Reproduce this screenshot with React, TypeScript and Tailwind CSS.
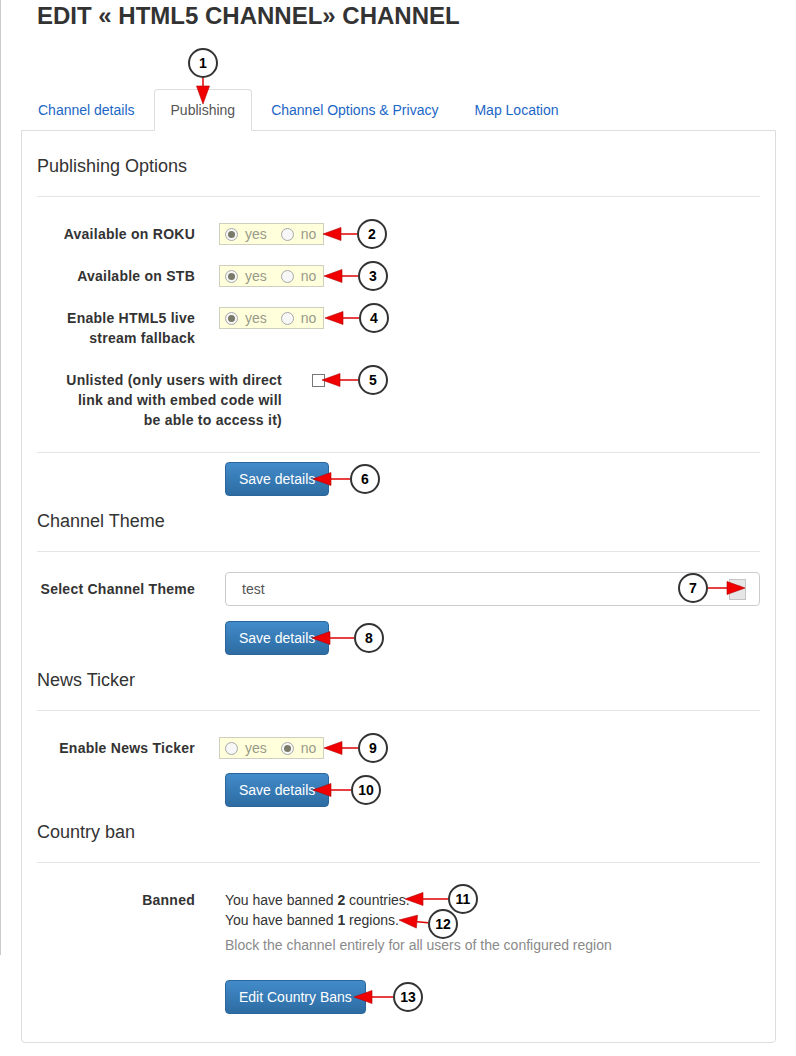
import React from 'react';

type Callout = { n: number; cx: number; cy: number; tx: number; ty: number };

const callouts: Callout[] = [
  { n: 1, cx: 203, cy: 63, tx: 203, ty: 104 },
  { n: 2, cx: 372, cy: 234, tx: 323, ty: 234 },
  { n: 3, cx: 373, cy: 276, tx: 324, ty: 276 },
  { n: 4, cx: 374, cy: 318, tx: 325, ty: 318 },
  { n: 5, cx: 373, cy: 380, tx: 322, ty: 380 },
  { n: 6, cx: 365, cy: 479, tx: 313, ty: 479 },
  { n: 7, cx: 693, cy: 588, tx: 745, ty: 588 },
  { n: 8, cx: 369, cy: 638, tx: 312, ty: 638 },
  { n: 9, cx: 373, cy: 748, tx: 324, ty: 748 },
  { n: 10, cx: 366, cy: 790, tx: 313, ty: 790 },
  { n: 11, cx: 463, cy: 899, tx: 405, ty: 899 },
  { n: 12, cx: 443, cy: 924, tx: 399, ty: 920 },
  { n: 13, cx: 408, cy: 997, tx: 354, ty: 997 },
];

function Annotations() {
  return (
    <svg
      className="pointer-events-none absolute left-0 top-0 z-20"
      width={796}
      height={1056}
      viewBox="0 0 796 1056"
    >
      {callouts.map((c) => {
        const dx = c.tx - c.cx;
        const dy = c.ty - c.cy;
        const len = Math.sqrt(dx * dx + dy * dy);
        const ux = dx / len;
        const uy = dy / len;
        const px = -uy;
        const py = ux;
        const head = 18;
        const hw = 6.5;
        const sx = c.cx + ux * 15;
        const sy = c.cy + uy * 15;
        const bx = c.tx - ux * head;
        const by = c.ty - uy * head;
        return (
          <g key={c.n}>
            <line x1={sx} y1={sy} x2={bx} y2={by} stroke="#e00000" strokeWidth={1.5} />
            <polygon
              points={`${c.tx},${c.ty} ${bx + px * hw},${by + py * hw} ${bx - px * hw},${by - py * hw}`}
              fill="#f00000"
              stroke="#b00000"
              strokeWidth={0.6}
            />
            <circle cx={c.cx} cy={c.cy} r={14} fill="#fff" stroke="#333" strokeWidth={2} />
            <text
              x={c.cx}
              y={c.cy + 5}
              textAnchor="middle"
              fontSize={14}
              fontWeight="bold"
              fontFamily="'Liberation Sans', Arial, sans-serif"
              fill="#000"
            >
              {c.n}
            </text>
          </g>
        );
      })}
    </svg>
  );
}

function Radio({ checked }: { checked?: boolean }) {
  return (
    <span className="flex h-[13px] w-[13px] items-center justify-center rounded-full border border-[#a8a8a8] bg-[#f7f7f7]">
      {checked && <span className="h-[7px] w-[7px] rounded-full bg-[#7a7a6a]" />}
    </span>
  );
}

function YesNo({ value }: { value: 'yes' | 'no' }) {
  return (
    <div className="-ml-[6px] flex h-[22px] w-[105px] items-center border border-[#cfcfbf] bg-[#ffffdc] pl-[5px] text-[14px] text-[#9a9a8a]">
      <Radio checked={value === 'yes'} />
      <span className="ml-[7px]">yes</span>
      <span className="ml-[14px]">
        <Radio checked={value === 'no'} />
      </span>
      <span className="ml-[7px]">no</span>
    </div>
  );
}

const labelText = 'shrink-0 whitespace-nowrap text-right text-[14px] font-bold leading-5 tracking-[0.25px] text-[#333]';

function Row({
  label,
  className,
  labelWidth = 'w-[158px]',
  children,
}: {
  label: React.ReactNode;
  className?: string;
  labelWidth?: string;
  children: React.ReactNode;
}) {
  return (
    <div className={'flex items-start ' + (className ?? '')}>
      <div className={'mt-px ' + labelText + ' ' + labelWidth}>{label}</div>
      <div className="ml-[30px] flex-1">{children}</div>
    </div>
  );
}

function SaveButton({ label, className }: { label: string; className?: string }) {
  return (
    <button
      className={
        'h-[34px] rounded-[4px] border border-[#2b669a] bg-linear-to-b from-[#428bca] to-[#2d6ca2] px-[13px] text-[14px] text-white ' +
        (className ?? '')
      }
    >
      {label}
    </button>
  );
}

function SectionHeading({ title, className }: { title: string; className?: string }) {
  return (
    <>
      <h3 className={'text-[18px] leading-5 text-[#333] ' + (className ?? '')}>{title}</h3>
      <div className="mt-5 h-px bg-[#e5e5e5]" />
    </>
  );
}

export default function App() {
  const tabs = ['Channel details', 'Publishing', 'Channel Options & Privacy', 'Map Location'];

  return (
    <div className="relative flex h-[1056px] w-[796px] overflow-hidden bg-white font-['Liberation_Sans',Arial,sans-serif] text-[#333]">
      <div className="h-[955px] w-px shrink-0 bg-[#cccccc]" />

      <div className="ml-[20px] w-[755px]">
        <h1 className="ml-[16px] mt-[2px] text-[24px] font-bold leading-[28px] text-[#333]">
          EDIT « HTML5 CHANNEL» CHANNEL
        </h1>

        <ul className="mt-[59px] flex">
          {tabs.map((t) => {
            const active = t === 'Publishing';
            return (
              <li
                key={t}
                className={
                  'relative z-10 -mb-px mr-[2px] rounded-t-[4px] border px-[16px] py-[10px] text-[14px] leading-5 ' +
                  (active
                    ? 'border-[#ddd] border-b-white bg-white text-[#555]'
                    : 'border-transparent text-[#1c66c6]')
                }
              >
                {t}
              </li>
            );
          })}
        </ul>

        <div className="h-[913px] rounded-b-[4px] border border-[#ddd] px-[15px]">
          <SectionHeading title="Publishing Options" className="pt-[25px]" />

          <Row label="Available on ROKU" className="mt-[26px]">
            <YesNo value="yes" />
          </Row>
          <Row label="Available on STB" className="mt-5">
            <YesNo value="yes" />
          </Row>
          <Row label={<>Enable HTML5 live<br />stream fallback</>} className="mt-5">
            <YesNo value="yes" />
          </Row>
          <Row
            labelWidth="w-[245px]"
            label={
              <>
                Unlisted (only users with direct
                <br />
                link and with embed code will
                <br />
                be able to access it)
              </>
            }
            className="mt-[21px]"
          >
            <div className="mt-[5px] h-[13px] w-[13px] border border-[#777] bg-white" />
          </Row>

          <div className="mt-[22px] h-px bg-[#e5e5e5]" />
          <SaveButton label="Save details" className="ml-[188px] mt-[9px]" />

          <SectionHeading title="Channel Theme" className="mt-[15px]" />
          <div className="mt-5 flex items-center">
            <div className={labelText + ' w-[158px]'}>Select Channel Theme</div>
            <div className="ml-[30px] flex h-[34px] flex-1 items-center justify-between rounded-[4px] border border-[#ccc] pl-[16px] pr-[13px] text-[14px] text-[#555]">
              <span>test</span>
              <span className="flex h-[21px] w-[17px] items-center justify-center border border-[#c4c4c4] bg-[#e6e6e6] text-[9px] text-[#777]">
                ✓
              </span>
            </div>
          </div>
          <SaveButton label="Save details" className="ml-[188px] mt-[15px]" />

          <SectionHeading title="News Ticker" className="mt-[15px]" />
          <Row label="Enable News Ticker" className="mt-[26px]">
            <YesNo value="no" />
          </Row>
          <SaveButton label="Save details" className="ml-[188px] mt-[14px]" />

          <SectionHeading title="Country ban" className="mt-[15px]" />
          <div className="mt-[27px] flex items-start">
            <div className={labelText + ' w-[158px]'}>Banned</div>
            <div className="ml-[30px] text-[14px] leading-5 text-[#333]">
              <div>
                You have banned <b>2</b> countries.
              </div>
              <div>
                You have banned <b>1</b> regions.
              </div>
              <div className="mt-[5px] text-[#8a8a8a]">
                Block the channel entirely for all users of the configured region
              </div>
            </div>
          </div>
          <SaveButton label="Edit Country Bans" className="ml-[188px] mt-[25px]" />
        </div>
      </div>

      <Annotations />
    </div>
  );
}
